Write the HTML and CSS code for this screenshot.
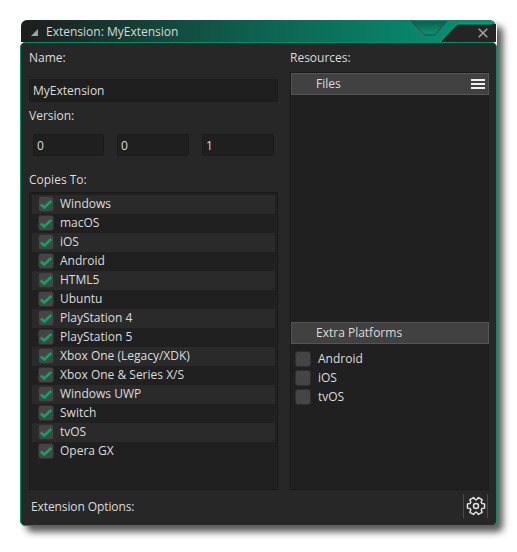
FILE: index.html
```html
<!DOCTYPE html>
<html lang="en">
<head>
<meta charset="utf-8">
<title>Extension: MyExtension</title>
<link rel="stylesheet" href="styles.css">
</head>
<body>
<div class="window">
  <div class="titlebar">
    <span class="collapse"></span>
    <span class="title">Extension: MyExtension</span>
    <svg class="deco" width="100" height="22" viewBox="0 0 100 22">
      <defs>
        <linearGradient id="notch" x1="0" y1="0" x2="0" y2="1">
          <stop offset="0" stop-color="#0a5f4d"/>
          <stop offset="1" stop-color="#0b9474"/>
        </linearGradient>
      </defs>
      <path d="M15 1L29 15H39L51 1Z" fill="url(#notch)"/>
      <path d="M15 1L29 15H39L51 1" fill="none" stroke="#0a5040"/>
      <path d="M44 22L61 4H100V22Z" fill="#242424"/>
      <path d="M44 22L61 4H96" fill="none" stroke="#12a582"/>
    </svg>
    <svg class="close" width="10" height="10" viewBox="0 0 10 10"><path d="M.7.7l8.600 8.600M9.300.7L.7 9.300" stroke="#a8a8a8" stroke-width="1.400" fill="none"/></svg>
  </div>
  <div class="body">
    <div class="columns">
      <div class="left">
        <div class="label name-label">Name:</div>
        <div class="input name-input">MyExtension</div>
        <div class="label version-label">Version:</div>
        <div class="versions">
          <div class="input">0</div>
          <div class="input">0</div>
          <div class="input">1</div>
        </div>
        <div class="label copies-label">Copies To:</div>
        <div class="list">
          <div class="row alt"><span class="check"><svg width="14" height="12" viewBox="0 0 14 12"><path d="M1.800 6.500L5.300 9.500 12.200 3" /></svg></span>Windows</div>
          <div class="row"><span class="check"><svg width="14" height="12" viewBox="0 0 14 12"><path d="M1.800 6.500L5.300 9.500 12.200 3" /></svg></span>macOS</div>
          <div class="row alt"><span class="check"><svg width="14" height="12" viewBox="0 0 14 12"><path d="M1.800 6.500L5.300 9.500 12.200 3" /></svg></span>iOS</div>
          <div class="row"><span class="check"><svg width="14" height="12" viewBox="0 0 14 12"><path d="M1.800 6.500L5.300 9.500 12.200 3" /></svg></span>Android</div>
          <div class="row alt"><span class="check"><svg width="14" height="12" viewBox="0 0 14 12"><path d="M1.800 6.500L5.300 9.500 12.200 3" /></svg></span>HTML5</div>
          <div class="row"><span class="check"><svg width="14" height="12" viewBox="0 0 14 12"><path d="M1.800 6.500L5.300 9.500 12.200 3" /></svg></span>Ubuntu</div>
          <div class="row alt"><span class="check"><svg width="14" height="12" viewBox="0 0 14 12"><path d="M1.800 6.500L5.300 9.500 12.200 3" /></svg></span>PlayStation 4</div>
          <div class="row"><span class="check"><svg width="14" height="12" viewBox="0 0 14 12"><path d="M1.800 6.500L5.300 9.500 12.200 3" /></svg></span>PlayStation 5</div>
          <div class="row alt"><span class="check"><svg width="14" height="12" viewBox="0 0 14 12"><path d="M1.800 6.500L5.300 9.500 12.200 3" /></svg></span>Xbox One (Legacy/XDK)</div>
          <div class="row"><span class="check"><svg width="14" height="12" viewBox="0 0 14 12"><path d="M1.800 6.500L5.300 9.500 12.200 3" /></svg></span>Xbox One &amp; Series X/S</div>
          <div class="row alt"><span class="check"><svg width="14" height="12" viewBox="0 0 14 12"><path d="M1.800 6.500L5.300 9.500 12.200 3" /></svg></span>Windows UWP</div>
          <div class="row"><span class="check"><svg width="14" height="12" viewBox="0 0 14 12"><path d="M1.800 6.500L5.300 9.500 12.200 3" /></svg></span>Switch</div>
          <div class="row alt"><span class="check"><svg width="14" height="12" viewBox="0 0 14 12"><path d="M1.800 6.500L5.300 9.500 12.200 3" /></svg></span>tvOS</div>
          <div class="row"><span class="check"><svg width="14" height="12" viewBox="0 0 14 12"><path d="M1.800 6.500L5.300 9.500 12.200 3" /></svg></span>Opera GX</div>
        </div>
      </div>
      <div class="right">
        <div class="label name-label">Resources:</div>
        <div class="panel">
          <div class="header">
            <span>Files</span>
            <span class="menu"><i></i><i></i><i></i></span>
          </div>
          <div class="files-area"></div>
          <div class="header"><span>Extra Platforms</span></div>
          <div class="extras">
            <div class="row"><span class="check"></span>Android</div>
            <div class="row"><span class="check"></span>iOS</div>
            <div class="row"><span class="check"></span>tvOS</div>
          </div>
        </div>
      </div>
    </div>
    <div class="footer">
      <span class="options">Extension Options:</span>
      <span class="gear">
        <svg width="20" height="20" viewBox="0 0 20 20" fill="none" stroke="#e2e2e2" stroke-width="1.500" stroke-linejoin="round">
          <path d="M15.850 7.400L18.540 7.870V12.130L15.850 12.600L15.180 13.760L16.110 16.330L12.430 18.460L10.670 16.360H9.330L7.570 18.460L3.890 16.330L4.820 13.760L4.150 12.600L1.460 12.130V7.870L4.150 7.400L4.820 6.240L3.890 3.670L7.570 1.540L9.330 3.640H10.670L12.430 1.540L16.110 3.670L15.180 6.240Z"/>
          <circle cx="10" cy="10" r="2.500"/>
        </svg>
      </span>
    </div>
  </div>
</div>
</body>
</html>
```

FILE: styles.css
```css
* { box-sizing: border-box; }
html, body { margin: 0; padding: 0; background: #fff; }
body {
  width: 517px;
  height: 552px;
  padding: 20px 0 0 20px;
  font-family: "Open Sans", "Noto Sans", sans-serif;
  font-size: 12px;
  color: #dcdcdc;
  overflow: hidden;
}
.window {
  width: 477px;
  height: 506px;
  display: flex;
  flex-direction: column;
  border-radius: 6px;
  box-shadow: 6px 6px 7px rgba(0,0,0,.65);
}
.titlebar {
  position: relative;
  height: 22px;
  flex: none;
  margin: 0 1px;
  border-radius: 6px 6px 0 0;
  background: linear-gradient(90deg, #1d1d1d 0%, #0f5c4c 45%, #08876d 85%, #0c9175 100%);
  display: flex;
  align-items: center;
  padding-left: 25px;
}
.collapse {
  position: absolute;
  left: 10px;
  top: 9px;
  width: 0;
  height: 0;
  border-left: 7px solid transparent;
  border-bottom: 7px solid #a0a0a0;
}
.title { font-size: 12px; color: #d8d8d8; }
.deco { position: absolute; right: 0; top: 0; }
.close { position: absolute; right: 8px; top: 8px; }
.body {
  flex: 1;
  display: flex;
  flex-direction: column;
  min-height: 0;
  background: #272727;
  border: 1px solid #0d8a63;
  border-radius: 5px;
  padding: 0 7px 0 8px;
}
.columns { display: flex; gap: 12px; height: 447px; flex: none; }
.left { width: 249px; display: flex; flex-direction: column; }
.right { width: 199px; display: flex; flex-direction: column; }
.label { font-size: 12px; line-height: 16px; color: #dcdcdc; }
.name-label { margin-top: 7px; }
.input {
  height: 23px;
  background: #1f1f1f;
  border: 1px solid #1b1b1b;
  border-radius: 2px;
  line-height: 21px;
  padding-left: 3px;
  color: #dcdcdc;
}
.name-input { margin-top: 13px; }
.version-label { margin-top: 6px; }
.versions {
  display: grid;
  grid-template-columns: 71px 72px 72px;
  gap: 13px;
  margin-top: 10px;
  padding-left: 4px;
}
.versions .input { height: 22px; line-height: 22px; }
.copies-label { margin-top: 16px; }
.list {
  margin-top: 4px;
  height: 298px;
  background: #202020;
  border: 1px solid #191919;
  padding: 2px 2px 0 2px;
}
.row {
  height: 19px;
  display: flex;
  align-items: flex-start;
  line-height: 17px;
  color: #dcdcdc;
}
.row.alt { background: #2a2a2a; }
.check {
  flex: none;
  width: 16px;
  height: 16px;
  margin: 1px 6px 0 6px;
  background: #454545;
  border: 1px solid #303030;
  border-radius: 3px;
  display: flex;
  align-items: center;
  justify-content: center;
}
.check svg { fill: none; stroke: #0da560; stroke-width: 2.600; }
.panel {
  margin-top: 6px;
  flex: 1;
  min-height: 0;
  display: flex;
  flex-direction: column;
  background: #202020;
  border-left: 1px solid #191919;
  border-top: 1px solid #191919;
  border-bottom: 1px solid #191919;
}
.header {
  height: 22px;
  flex: none;
  background: #414141;
  border: 1px solid #555;
  display: flex;
  align-items: center;
  justify-content: space-between;
  padding: 0 3px 1px 24px;
  color: #dcdcdc;
}
.files-area { flex: 1; }
.menu { display: flex; flex-direction: column; gap: 2px; margin-top: 1px; }
.menu i { display: block; width: 14px; height: 2px; background: #f0f0f0; }
.extras { height: 145px; padding-top: 6px; }
.extras .row { line-height: 18px; }
.extras .check { margin: 1px 7px 0 4px; }
.footer {
  flex: none;
  height: 24px;
  margin-top: 4px;
  display: flex;
  align-items: center;
  justify-content: space-between;
  padding: 0 1px 0 2px;
}
.options { color: #dcdcdc; letter-spacing: -.1px; }
.gear {
  width: 25px;
  height: 24px;
  border-left: 1px solid #4a4a4a;
  border-right: 1px solid #4a4a4a;
  display: flex;
  align-items: center;
  justify-content: center;
}
```
